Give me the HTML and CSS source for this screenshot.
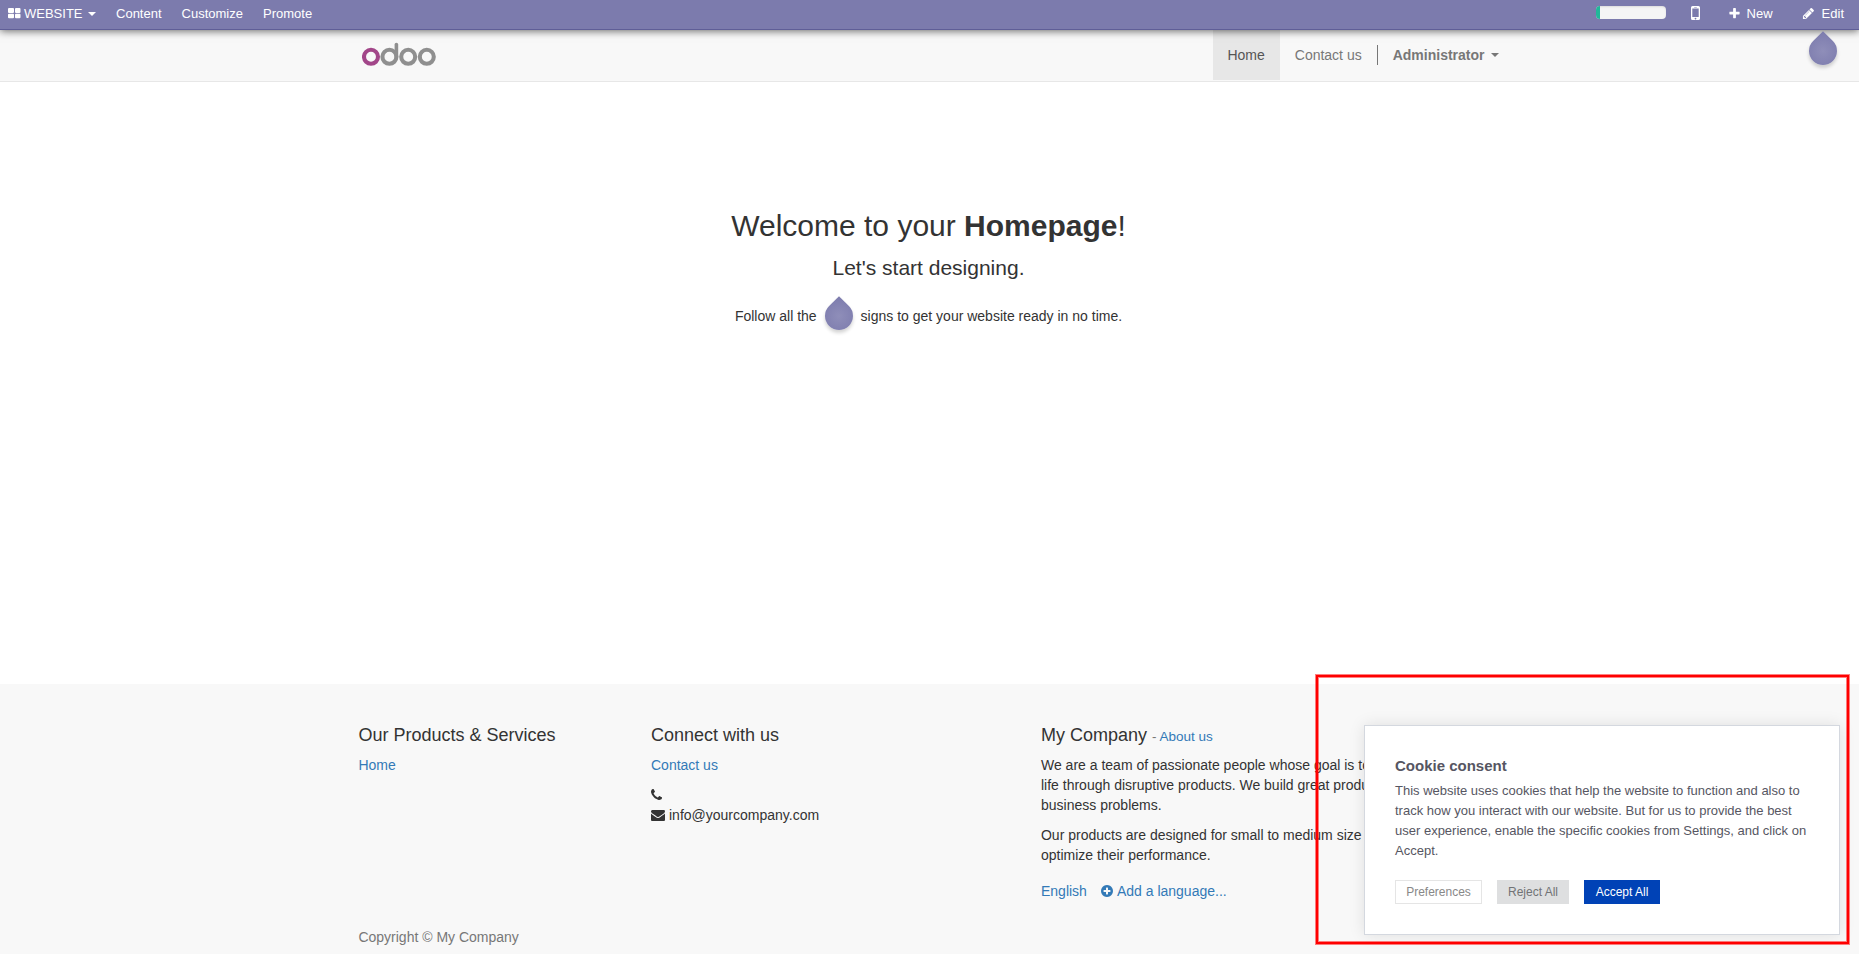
FILE: index.html
```
<!DOCTYPE html>
<html lang="en">
<head>
<meta charset="utf-8">
<title>Homepage | My Website</title>
<link rel="stylesheet" href="styles.css">
</head>
<body>
<div class="page">
  <nav class="topbar">
    <div class="topbar-menu">
      <a class="brand"><svg class="icon-grid" width="13" height="11" viewBox="0 0 13 11"><path fill="currentColor" d="M1 0h4q1 0 1 1v3q0 1-1 1H1Q0 5 0 4V1q0-1 1-1zM8 0h3.500q1 0 1 1v3q0 1-1 1H8Q7 5 7 4V1q0-1 1-1zM1 5.700h4q1 0 1 1v2.600q0 1-1 1H1q-1 0-1-1V6.700q0-1 1-1zM8 5.700h3.500q1 0 1 1v2.600q0 1-1 1H8q-1 0-1-1V6.700q0-1 1-1z"/></svg>WEBSITE<i class="caret caret-light"></i></a>
      <a>Content</a>
      <a>Customize</a>
      <a>Promote</a>
    </div>
    <div class="topbar-tools">
      <div class="progress"><div class="progress-fill"></div></div>
      <svg class="icon-mobile" width="9" height="14" viewBox="0 0 9 14"><path fill="currentColor" fill-rule="evenodd" d="M1.500 0h6q1.500 0 1.500 1.500v11q0 1.500-1.500 1.500h-6Q0 14 0 12.500v-11Q0 0 1.500 0zM1.300 2.500v8.500h6.400V2.500zM3.200 1v.6h2.600V1zM4.500 11.800a.8.8 0 1 0 .01 0z"/></svg>
      <a class="tool-new"><svg width="13" height="13" viewBox="0 0 1792 1792"><path fill="currentColor" d="M1600 736v192q0 40-28 68t-68 28h-416v416q0 40-28 68t-68 28h-192q-40 0-68-28t-28-68v-416h-416q-40 0-68-28t-28-68v-192q0-40 28-68t68-28h416v-416q0-40 28-68t68-28h192q40 0 68 28t28 68v416h416q40 0 68 28t28 68z"/></svg>New</a>
      <a class="tool-edit"><svg width="13" height="13" viewBox="0 0 1792 1792"><path fill="currentColor" d="M491 1536l91-91-235-235-91 91v107h128v128h107zm523-928q0-22-22-22-10 0-17 7l-542 542q-7 7-7 17 0 22 22 22 10 0 17-7l542-542q7-7 7-17zm-54-192l416 416-832 832h-416v-416zm683 96q0 53-37 90l-166 166-416-416 166-165q36-38 90-38 53 0 91 38l235 234q37 39 37 91z"/></svg>Edit</a>
    </div>
  </nav>

  <header class="site-header">
    <div class="container header-row">
      <svg class="logo" width="76" height="28" viewBox="0 0 76 28" fill="none" stroke-width="4.100" role="img" aria-label="odoo">
        <circle cx="9" cy="16.800" r="7" stroke="#a24689"/>
        <g stroke="#8f8f8f"><circle cx="27.400" cy="16.800" r="7"/><path d="M34.400 17V4.600" stroke-width="3.600" stroke-linecap="round"/><circle cx="46.200" cy="16.800" r="7"/><circle cx="64.800" cy="16.800" r="7"/></g>
      </svg>
      <ul class="nav">
        <li class="active">Home</li>
        <li>Contact us</li>
        <li class="divider"></li>
        <li class="user">Administrator<i class="caret"></i></li>
      </ul>
    </div>
  </header>
  <i class="drop drop-edit"></i>

  <main class="hero">
    <h1>Welcome to your <b>Homepage</b>!</h1>
    <h3>Let's start designing.</h3>
    <p class="follow"><span>Follow all the</span><i class="drop"></i><span>signs to get your website ready in no time.</span></p>
  </main>

  <footer class="footer">
    <div class="container footer-cols">
      <section class="col-products">
        <h4>Our Products &amp; Services</h4>
        <p><a>Home</a></p>
      </section>
      <section class="col-connect">
        <h4>Connect with us</h4>
        <p><a>Contact us</a></p>
        <p class="contact-line"><svg width="14" height="14" viewBox="192 0 1792 1792"><path fill="currentColor" d="M1600 1240q0 27-10 70.500t-21 68.500q-21 50-122 106-94 51-186 51-27 0-53-3.500t-57.500-12.500-47-14.500-55.500-20.500-49-18q-98-35-175-83-127-79-264-216t-216-264q-48-77-83-175-3-9-18-49t-20.500-55.500-14.500-47-12.500-57.500-3.500-53q0-92 51-186 56-101 106-122 25-11 68.500-21t70.500-10q14 0 21 3 18 6 53 76 11 19 30 54t35 63.500 31 53.500q3 4 17.500 25t21.500 35.500 7 28.500q0 20-28.500 50t-62 55-62 53-28.500 46q0 9 5 22.500t8.500 20.500 14 24 11.500 19q76 137 174 235t235 174q2 1 19 11.500t24 14 20.500 8.500 22.500 5q18 0 46-28.500t53-62 55-62 50-28.500q14 0 28.500 7t35.500 21.500 25 17.500q25 15 53.500 31t63.500 35 54 30q70 35 76 53 3 7 3 21z"/></svg></p>
        <p class="contact-line"><svg width="14" height="14" viewBox="0 0 1792 1792"><path fill="currentColor" d="M1792 710v794q0 66-47 113t-113 47h-1472q-66 0-113-47t-47-113v-794q44 49 101 87 362 246 497 345 57 42 92.500 65.500t94.500 48 110 24.500h2q51 0 110-24.500t94.500-48 92.500-65.500q170-123 498-345 57-39 100-87zm0-294q0 79-49 151t-122 123q-376 261-468 325-10 7-42.500 31t-54 38.500-52 32.500-57.500 27-50 9h-2q-23 0-50-9t-57.500-27-52-32.500-54-38.500-42.500-31q-91-64-262-182.500t-205-142.500q-62-42-117-115.500t-55-136.500q0-78 41.500-130t118.500-52h1472q65 0 112.500 47t47.500 113z"/></svg>info@yourcompany.com</p>
      </section>
      <section class="col-company">
        <h4>My Company <small>- <a>About us</a></small></h4>
        <p>We are a team of passionate people whose goal is to<br>life through disruptive products. We build great produ<br>business problems.</p>
        <p>Our products are designed for small to medium size<br>optimize their performance.</p>
        <div class="languages"><a>English</a><a class="add-language"><svg width="14" height="14" viewBox="128 0 1792 1792"><path fill="currentColor" d="M1344 960v-128q0-26-19-45t-45-19h-256v-256q0-26-19-45t-45-19h-128q-26 0-45 19t-19 45v256h-256q-26 0-45 19t-19 45v128q0 26 19 45t45 19h256v256q0 26 19 45t45 19h128q26 0 45-19t19-45v-256h256q26 0 45-19t19-45zm320-64q0 209-103 385.500t-279.500 279.500-385.500 103-385.500-103-279.500-279.500-103-385.500 103-385.500 279.500-279.500 385.500-103 385.500 103 279.500 279.500 103 385.500z"/></svg>Add a language...</a></div>
      </section>
    </div>
    <div class="container copyright">Copyright © My Company</div>
  </footer>

  <aside class="cookie">
    <h5>Cookie consent</h5>
    <p>This website uses cookies that help the website to function and also to<br>track how you interact with our website. But for us to provide the best<br>user experience, enable the specific cookies from Settings, and click on<br>Accept.</p>
    <div class="cookie-actions">
      <button class="btn btn-preferences">Preferences</button>
      <button class="btn btn-reject">Reject All</button>
      <button class="btn btn-accept">Accept All</button>
    </div>
  </aside>
  <div class="highlight"></div>
</div>
</body>
</html>
```
FILE: styles.css
```
* { box-sizing: border-box; }
body {
  margin: 0;
  font: 14px/20px "Liberation Sans", Arial, sans-serif;
  color: #333;
  background: #fff;
}
h1, h3, h4, h5, p, ul { margin: 0; padding: 0; font-weight: normal; }
svg { flex: none; display: block; }
a { color: #337ab7; }
.page { position: relative; width: 1859px; height: 954px; overflow: hidden; display: flex; flex-direction: column; }
.container { width: 1170px; margin-left: 343.4px; padding: 0 15px; }

.topbar {
  position: relative;
  z-index: 2;
  flex: none;
  height: 30px;
  display: flex;
  justify-content: space-between;
  background: #7c7bad;
  border-bottom: 1px solid #5f5e97;
  box-shadow: 0 1px 8px rgba(0, 0, 0, .6);
  font-size: 13px;
  line-height: 27px;
}
.topbar a { color: #fff; display: flex; align-items: center; height: 27px; }
.topbar-menu { display: flex; gap: 20px; padding-left: 8px; }
.icon-grid { margin-right: 3px; margin-top: -1px; }
.caret {
  width: 0;
  height: 0;
  border: 4px solid transparent;
  border-top-color: #777;
  border-bottom: 0;
  margin-left: 6px;
}
.caret-light { border-top-color: #fff; margin: 1px 0 0 5.5px; }
.topbar-tools { display: flex; padding-right: 15px; }
.progress { width: 70px; height: 13px; margin-top: 6px; background: #f5f5f5; border-radius: 4px; overflow: hidden; box-shadow: inset 0 1px 2px rgba(0, 0, 0, .1); }
.progress-fill { width: 4px; height: 100%; background: #21b799; }
.icon-mobile { color: #fff; margin: 6px 0 0 25px; }
.tool-new { margin-left: 28px; gap: 6px; }
.tool-edit { margin-left: 29px; gap: 7px; }

.site-header { flex: none; height: 52px; background: #f8f8f8; border-bottom: 1px solid #e7e7e7; }
.header-row { display: flex; justify-content: space-between; margin-left: 344px; padding-right: 0; }
.logo { margin: 10px 0 0 3px; }
.nav { display: flex; list-style: none; color: #777; height: 50px; }
.nav li { padding: 15px 15.500px 15px 14.500px; line-height: 20px; }
.nav .active { background: #e7e7e7; color: #555; }
.nav .divider { width: 1px; padding: 0; height: 20px; margin-top: 15px; background: #777; }
.nav .user { font-weight: bold; display: flex; align-items: center; }

.drop {
  display: block;
  flex: none;
  width: 28px;
  height: 28px;
  border-radius: 0 50% 50% 50%;
  background: radial-gradient(#8f8eb9, #7c7bad);
  transform: rotate(45deg);
  box-shadow: 2px 2px 4px rgba(0, 0, 0, .18);
}
.drop-edit { position: absolute; left: 1809px; top: 37px; z-index: 3; }

.hero { height: 602px; flex: none; display: flex; flex-direction: column; align-items: center; padding: 127px 2px 0 0; }
.hero h1 { font-size: 30px; line-height: 33px; }
.hero h3 { font-size: 21px; line-height: 24px; margin-top: 14px; }
.follow { display: flex; align-items: center; margin-top: 22px; height: 28px; }
.follow .drop { margin: 0 7.5px 0 8.5px; }

.footer { flex: 1; background: #f8f8f8; padding-top: 41px; }
.footer-cols { display: flex; height: 202px; }
.col-products { width: 292.600px; }
.col-connect { width: 390px; }
.footer h4 { font-size: 18px; line-height: 20px; height: 20px; margin-bottom: 10px; }
.footer h4 small { font-size: 13.5px; line-height: 1; color: #777; }
.footer p { margin-bottom: 10px; white-space: nowrap; }
.footer .contact-line { margin: 0; height: 20px; display: flex; align-items: center; gap: 4px; }
.languages { display: flex; margin-top: 16px; gap: 14px; }
.add-language { display: flex; align-items: center; gap: 2px; }
.copyright { color: #777; }

.cookie {
  position: absolute;
  left: 1364px;
  top: 725px;
  width: 476px;
  height: 210px;
  padding: 30px;
  background: #fff;
  border: 1px solid #d4d8df;
  box-shadow: 0 0 15px rgba(0, 0, 0, .1);
  color: #565662;
  font-size: 13px;
}
.cookie h5 { font-size: 15px; line-height: 20px; font-weight: bold; }
.cookie p { margin-top: 5px; white-space: nowrap; }
.cookie-actions { display: flex; gap: 15px; margin-top: 19px; }
.btn { height: 24px; padding: 0; border: 0; font: 12px/22px "Liberation Sans", Arial, sans-serif; text-align: center; }
.btn-preferences { width: 87px; background: #fff; border: 1px solid #e5e5e5; color: #888; }
.btn-reject { width: 72px; background: #dedfe0; color: #717375; }
.btn-accept { width: 76px; background: #0042b6; color: #fff; }

.highlight {
  position: absolute;
  left: 1316px;
  top: 675px;
  width: 533px;
  height: 269px;
  border: 2px solid #f00;
  box-shadow: 0 0 0 1px rgba(255, 0, 0, .5), inset 0 0 0 1px rgba(255, 0, 0, .5);
}
```
